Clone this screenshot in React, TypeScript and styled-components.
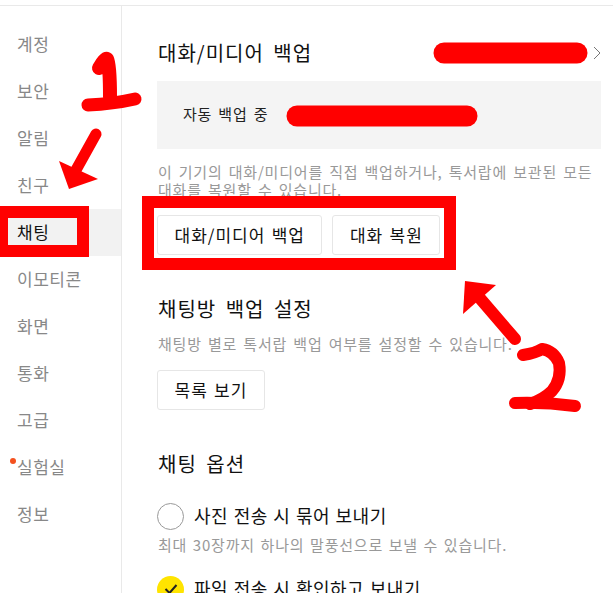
import * as React from 'react';
import styled, { createGlobalStyle } from 'styled-components';

const navItems = ['계정', '보안', '알림', '친구', '채팅', '이모티콘', '화면', '통화', '고급', '실험실', '정보'];

const App = () => {
    return (
        <Page>
            <GlobalStyle />
            <Sidebar>
                {navItems.map(item => (
                    <NavItem key={item} active={item === '채팅'}>
                        {item === '실험실' && <NewDot />}
                        {item}
                    </NavItem>
                ))}
            </Sidebar>
            <Content>
                <TitleRow>
                    <SectionTitle>대화/미디어 백업</SectionTitle>
                    <Chevron viewBox='0 0 8 14'>
                        <path d='M1 1l6 6-6 6' fill='none' stroke='#777' strokeWidth='1' />
                    </Chevron>
                </TitleRow>
                <StatusBox>자동 백업 중</StatusBox>
                <Description>이 기기의 대화/미디어를 직접 백업하거나, 톡서랍에 보관된 모든 대화를 복원할 수 있습니다.</Description>
                <ButtonRow>
                    <Button>대화/미디어 백업</Button>
                    <Button>대화 복원</Button>
                </ButtonRow>

                <NextTitle>채팅방 백업 설정</NextTitle>
                <SecondDescription>채팅방 별로 톡서랍 백업 여부를 설정할 수 있습니다.</SecondDescription>
                <ListButtonRow>
                    <Button>목록 보기</Button>
                </ListButtonRow>

                <NextTitle>채팅 옵션</NextTitle>
                <OptionRow>
                    <Radio />
                    <OptionLabel>사진 전송 시 묶어 보내기</OptionLabel>
                </OptionRow>
                <OptionHint>최대 30장까지 하나의 말풍선으로 보낼 수 있습니다.</OptionHint>
                <CheckedRow>
                    <Radio checked>
                        <svg width='14' height='12' viewBox='0 0 14 12'>
                            <path d='M1.5 6l4 4 7-8' fill='none' stroke='#222' strokeWidth='2' />
                        </svg>
                    </Radio>
                    <OptionLabel>파일 전송 시 확인하고 보내기</OptionLabel>
                </CheckedRow>
            </Content>

            {/* 스크린샷 위에 그린 빨간 표시 */}
            <Markup viewBox='0 0 613 593'>
                <g fill='none' stroke='#f00' strokeLinecap='round' strokeLinejoin='round'>
                    <path d='M99 68q6-10 8-9 3 6 3 38' strokeWidth='14' />
                    <path d='M88 105q25-1 47-6' strokeWidth='13' />
                    <path d='M96 134L76 170' strokeWidth='11' />
                    <path d='M444 53h133' strokeWidth='21' />
                    <path d='M297 116h150l20 0' strokeWidth='21' />
                    <path d='M515 339L478 296' strokeWidth='12' />
                    <path d='M523 355q13-2 19-6 12 2 17 14 3 16-7 28-8 8-22 13' strokeWidth='12' />
                    <path d='M515 403q30-1 60 3' strokeWidth='12' />
                </g>
                <g fill='#f00'>
                    <path d='M59 161L98 179 69 189z' />
                    <path d='M465 281L496 285 463 314z' />
                </g>
                <g fill='none' stroke='#f00' strokeWidth='12'>
                    <rect x='2' y='212' width='81' height='39' />
                    <rect x='148' y='202' width='302' height='62' />
                </g>
            </Markup>
        </Page>
    );
};

export default App;


/** styles below */

const GlobalStyle = createGlobalStyle`
    html, body {
        margin: 0;
        background: #fff;
        overflow: hidden;
    }
`;

const Page = styled.div`
    position: relative;
    display: flex;
    width: 613px;
    height: 593px;
    padding-top: 5px;
    box-sizing: border-box;
    overflow: hidden;
    font-family: 'Noto Sans CJK KR', 'Noto Sans', sans-serif;
`;

const Sidebar = styled.nav`
    flex: none;
    width: 121px;
    padding-top: 15px;
    border-top: 1px solid #e9e9e9;
    border-right: 1px solid #e9e9e9;
`;

const NavItem = styled.div<{ active?: boolean }>`
    position: relative;
    height: 47px;
    padding-left: 17px;
    line-height: 45px;
    font-size: 17px;
    letter-spacing: 0.5px;
    color: ${props => props.active ? '#111' : '#888'};
    background: ${props => props.active ? '#f2f2f2' : 'transparent'};
`;

const NewDot = styled.span`
    position: absolute;
    left: 10px;
    top: 14px;
    width: 6px;
    height: 6px;
    border-radius: 50%;
    background: #f4511e;
`;

const Content = styled.main`
    flex: 1;
    min-width: 0;
    padding: 0 12px 0 35px;
    border-top: 1px solid #e9e9e9;
`;

const TitleRow = styled.div`
    display: flex;
    align-items: center;
    justify-content: space-between;
    height: 30px;
    margin-top: 32px;
`;

const SectionTitle = styled.h2`
    margin: 0 0 0 1px;
    font-size: 20px;
    font-weight: 400;
    line-height: 30px;
    letter-spacing: 1px;
    word-spacing: 4px;
    color: #111;
`;

const NextTitle = styled(SectionTitle)`
    margin-top: 39px;
`;

const Chevron = styled.svg`
    width: 8px;
    height: 14px;
`;

const StatusBox = styled.div`
    height: 68px;
    margin-top: 13px;
    padding-left: 26px;
    line-height: 66px;
    font-size: 15px;
    letter-spacing: 0.8px;
    word-spacing: 2px;
    color: #222;
    background: #f4f4f4;
`;

const Description = styled.p`
    margin: 14px 0 0 1px;
    font-size: 15px;
    line-height: 18px;
    letter-spacing: 0.8px;
    word-spacing: 2px;
    color: #999;
`;

const SecondDescription = styled(Description)`
    margin-top: 11px;
`;

const ButtonRow = styled.div`
    display: flex;
    gap: 10px;
    margin-top: 16px;
`;

const ListButtonRow = styled(ButtonRow)`
    margin-top: 17px;
`;

const Button = styled.button`
    height: 40px;
    padding: 0 16.5px 2px;
    font-family: inherit;
    font-size: 17px;
    letter-spacing: 1px;
    word-spacing: 1.5px;
    color: #111;
    background: #fff;
    border: 1px solid #e6e6e6;
    border-radius: 3px;
`;

const OptionRow = styled.div`
    display: flex;
    align-items: center;
    gap: 10px;
    margin-top: 23px;
`;

const CheckedRow = styled(OptionRow)`
    margin-top: 20px;
`;

const Radio = styled.span<{ checked?: boolean }>`
    display: flex;
    flex: none;
    align-items: center;
    justify-content: center;
    width: 27px;
    height: 27px;
    box-sizing: border-box;
    border-radius: 50%;
    border: ${props => props.checked ? 'none' : '1.5px solid #999'};
    background: ${props => props.checked ? '#ffe400' : '#fff'};
`;

const OptionLabel = styled.span`
    margin-bottom: 2px;
    font-size: 18px;
    letter-spacing: 0.5px;
    word-spacing: 1px;
    color: #111;
`;

const OptionHint = styled.div`
    margin: 5px 0 0 1px;
    font-size: 15px;
    line-height: 20px;
    letter-spacing: 0.8px;
    word-spacing: 1.5px;
    color: #999;
`;

const Markup = styled.svg`
    position: absolute;
    left: 0;
    top: 0;
    width: 613px;
    height: 593px;
    pointer-events: none;
`;
